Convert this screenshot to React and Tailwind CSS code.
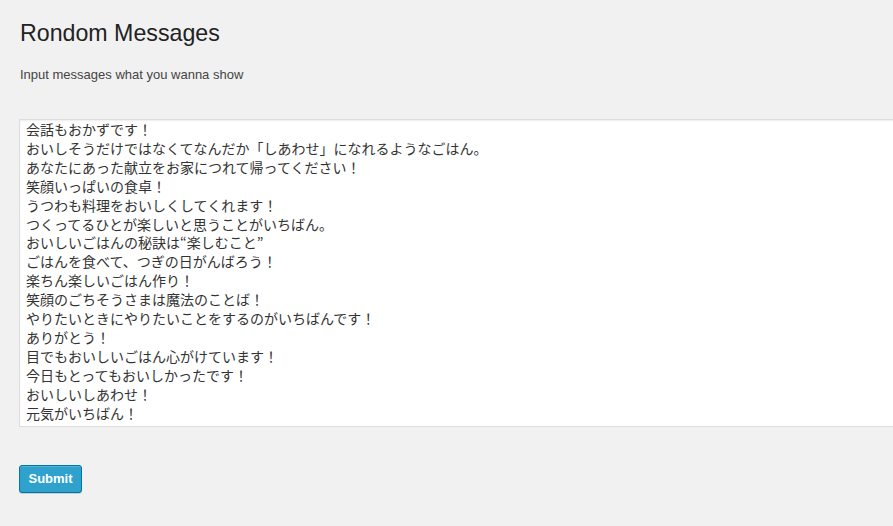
import React from 'react';

const messages = [
  '会話もおかずです！',
  'おいしそうだけではなくてなんだか「しあわせ」になれるようなごはん。',
  'あなたにあった献立をお家につれて帰ってください！',
  '笑顔いっぱいの食卓！',
  'うつわも料理をおいしくしてくれます！',
  'つくってるひとが楽しいと思うことがいちばん。',
  'おいしいごはんの秘訣は“楽しむこと”',
  'ごはんを食べて、つぎの日がんばろう！',
  '楽ちん楽しいごはん作り！',
  '笑顔のごちそうさまは魔法のことば！',
  'やりたいときにやりたいことをするのがいちばんです！',
  'ありがとう！',
  '目でもおいしいごはん心がけています！',
  '今日もとってもおいしかったです！',
  'おいしいしあわせ！',
  '元気がいちばん！',
];

const App = () => {
  return (
    <div className="min-h-[526px] w-full overflow-hidden bg-[#f1f1f1] pl-[19px] font-['Liberation_Sans','Noto_Sans_CJK_JP',sans-serif]">
      {/* Header */}
      <h2 className="pt-[19px] pl-px text-[23.2px] leading-[29px] font-normal text-[#222]">Rondom Messages</h2>
      <p className="mt-[18px] pl-px text-[13px] leading-[18px] text-[#444]">Input messages what you wanna show</p>

      {/* Messages */}
      <textarea
        className="mt-[35px] block h-[308px] w-[900px] resize-none overflow-hidden border border-[#ddd] bg-white px-[6px] pt-0 text-[14px] leading-[18.9px] text-[#333] shadow-[inset_0_1px_2px_rgba(0,0,0,0.07)] outline-none font-['Noto_Sans_CJK_JP',sans-serif]"
        defaultValue={messages.join('\n')}
      />

      {/* Submit */}
      <button
        type="submit"
        className="mt-[38px] h-[28px] w-[63px] rounded-[3px] border border-[#0074a2] bg-[#2ea2cc] text-[13px] font-bold text-white shadow-[inset_0_1px_0_rgba(120,200,230,0.5),0_1px_0_rgba(0,0,0,0.15)] font-['Liberation_Sans',sans-serif]"
      >
        Submit
      </button>
    </div>
  );
};

export default App;
